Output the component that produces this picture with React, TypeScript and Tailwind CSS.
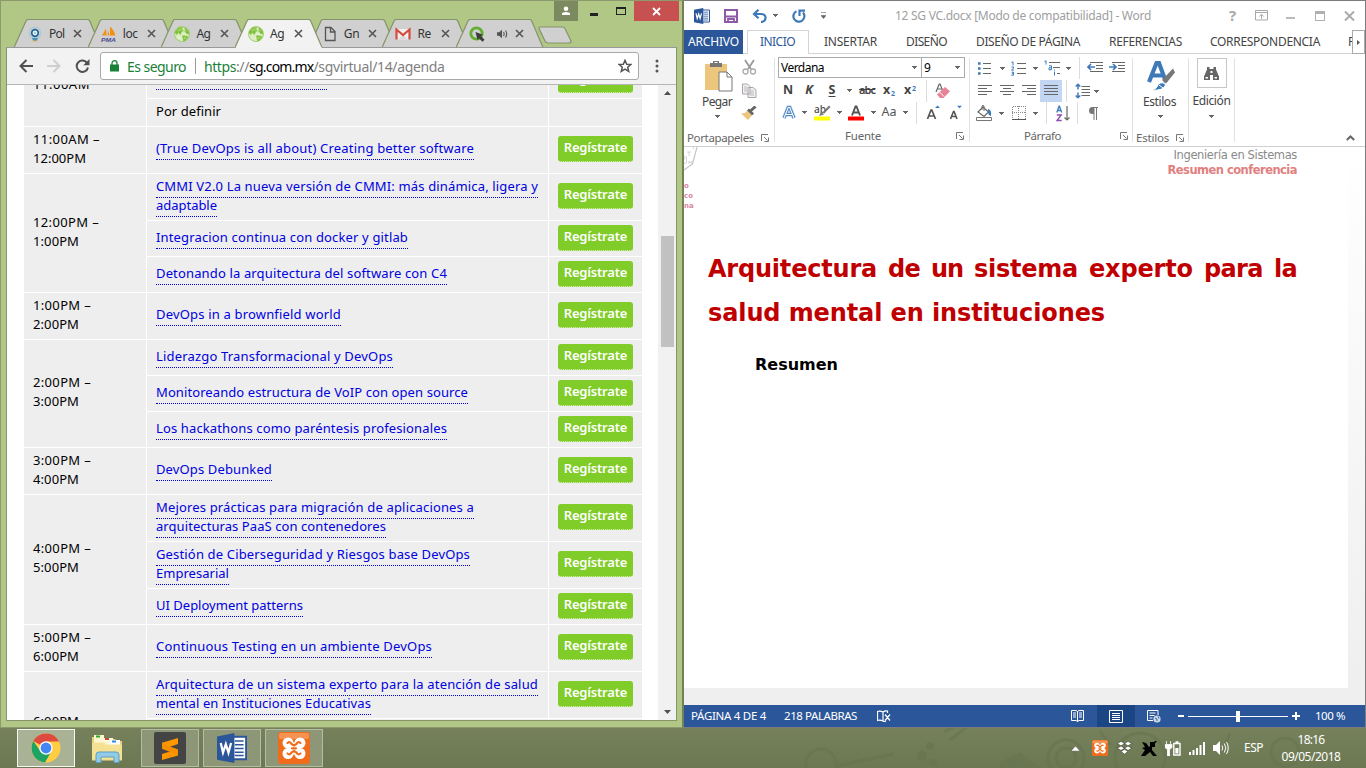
import { useLayoutEffect, useRef, type ReactNode } from "react";

/* Text set to a given line width by spreading its letters evenly. */
function Fit({ w, children, className = "" }: { w: number; children: string; className?: string }) {
  const ref = useRef<HTMLSpanElement>(null);
  useLayoutEffect(() => {
    const el = ref.current;
    if (!el) return;
    el.style.letterSpacing = "0px";
    const natural = el.getBoundingClientRect().width;
    el.style.letterSpacing = `${(w - natural) / children.length}px`;
  }, [w, children]);
  return (
    <span ref={ref} className={`inline-block w-fit shrink-0 whitespace-pre ${className}`}>
      {children}
    </span>
  );
}

function Slot({ className, children }: { className: string; children?: ReactNode }) {
  return <div className={`flex h-full shrink-0 items-center justify-center ${className}`}>{children}</div>;
}

const Caret = ({ className = "" }: { className?: string }) => (
  <svg className={`shrink-0 ${className}`} width="5" height="3" viewBox="0 0 5 3" shapeRendering="crispEdges">
    <path d="M0 0h5v1h-5zM1 1h3v1h-3zM2 2h1v1h-1z" fill="#666" />
  </svg>
);

const Rule = () => <div className="h-[22px] w-px bg-[#dcdcdc]" />;

/* ------------------------------------------------------------------ Chrome */

const Globe = () => (
  <svg width="16" height="16" viewBox="0 0 16 16">
    <circle cx="8" cy="8" r="7.5" fill="#d9ebba" />
    <path d="M1.500 4.500 4.500 1.400 8.500.8 9.500 2 8 3 10 4.500 7.500 6.500 7 9 4.500 7.500 3 9 .8 7zM10.500 1.200l3.700 2.600 1.200 4.700-2.900-.6-2-2.400zM8 9.500l4 .1 2.600 1.400-3.200 3.800-2.200.6-.7-3z" fill="#7bbf35" />
    <path d="M.5 8h15M8 .5v15M2 4h12M2 12h12M8 .5c-5 4-5 11 0 15M8 .5c5 4 5 11 0 15" stroke="#fff" strokeOpacity=".55" strokeWidth=".5" fill="none" />
    <circle cx="8" cy="8" r="7.5" fill="none" stroke="#92c855" strokeWidth=".8" />
  </svg>
);

const Crest = () => (
  <svg width="16" height="16" viewBox="0 0 16 16">
    <circle cx="8" cy="7" r="5.600" fill="none" stroke="#a3c6d3" strokeWidth="1.600" strokeDasharray="1.300 .8" />
    <circle cx="8" cy="7" r="3.300" fill="#eef" stroke="#20679b" strokeWidth="1.700" />
    <path d="M5 12h6l-1.200 3H6.200z" fill="#4b93b5" />
    <path d="M5.500 15h5" stroke="#e8b64c" strokeWidth="1" />
    <circle cx="8" cy="7" r="1" fill="#8ca" />
  </svg>
);

const Pma = () => (
  <svg width="16" height="16" viewBox="0 0 16 16">
    <path d="M1 9.500 5 2.500 5.600 9.500zM6.500 9.500 7 4 8.500 9.500zM9 9.500V.500c2.600 2.300 4.500 5.200 5.400 9z" fill="#f29111" />
    <path d="M1 10.300h14" stroke="#c9c9dc" strokeWidth=".6" />
    <text x="0" y="15.800" fontSize="5.600" fontWeight="700" fontStyle="italic" fontFamily="Liberation Sans, sans-serif" textLength="15" lengthAdjust="spacingAndGlyphs" fill="#4b4e91">PMA</text>
  </svg>
);

const PageIcon = () => (
  <svg width="16" height="16" viewBox="0 0 16 16">
    <path d="M3.500 1.500h5.500l4 4v9H3.500zM8.500 1.500V6H13" fill="none" stroke="#555" strokeWidth="1.300" />
  </svg>
);

const Gmail = () => (
  <svg width="16" height="16" viewBox="0 0 16 16">
    <path d="M1 3h14v10.500H1z" fill="#f1f1f1" />
    <path d="M3 13.500 8 8.500l5 5z" fill="#dcdcdc" />
    <path d="M1.500 13.500V3.500L8 9l6.500-5.500v10" fill="none" stroke="#d54b3d" strokeWidth="2.200" />
  </svg>
);

const Qlik = () => (
  <svg width="16" height="16" viewBox="0 0 16 16">
    <circle cx="7.500" cy="7.500" r="5.700" fill="none" stroke="#62ae2f" strokeWidth="2.800" />
    <path d="m6.500 6 7.500 2.700-2 1.300 3.500 3.800-2 2-3.600-3.500-1.300 1.900z" fill="#3c3c3c" />
  </svg>
);

const Speaker = () => (
  <svg className="ml-[12px] shrink-0" width="11" height="10" viewBox="0 0 11 10">
    <path d="M0 3.300h2L5 .8v8.400L2 6.700H0z" fill="#555" />
    <path d="M6.500 3c.8 1.200.8 2.800 0 4M8.500 1.500c1.400 2 1.400 5 0 7" fill="none" stroke="#555" strokeWidth="1.100" />
  </svg>
);

const TabX = () => (
  <svg className="shrink-0" width="9" height="9" viewBox="0 0 9 9">
    <path d="M1 1l7 7M8 1 1 8" stroke="#555" strokeWidth="1.600" />
  </svg>
);

type TabDef = { icon: ReactNode; label: string; w: number; active?: boolean; audio?: boolean };
const tabs: TabDef[] = [
  { icon: <Crest />, label: "Pol", w: 15.5 },
  { icon: <Pma />, label: "loc", w: 15 },
  { icon: <Globe />, label: "Ag", w: 14 },
  { icon: <Globe />, label: "Ag", w: 14, active: true },
  { icon: <PageIcon />, label: "Gn", w: 15.5 },
  { icon: <Gmail />, label: "Re", w: 13.5 },
  { icon: <Qlik />, label: "", w: 0, audio: true },
];

function Tab({ t }: { t: TabDef }) {
  const fill = t.active ? "#f2f2f2" : "#d0d0d0";
  return (
    <div className={`relative h-[29px] w-[73.700px] shrink-0 ${t.active ? "z-10" : ""}`}>
      <svg className="absolute top-0 left-0" width="90" height="29" viewBox="0 0 90 29">
        <path d="M0 28.500 12 2Q12.500.500 14.500.500H73Q75 .5 75.700 2L87 28.500" fill={fill} stroke="#85946a" strokeWidth="1.200" />
        {t.active ? <path d="M1 28.400h85.500" stroke="#f2f2f2" strokeWidth="1.400" /> : <path d="M0 28.500h88" stroke="#999" />}
      </svg>
      <div className="relative flex h-[29px] w-[88px] items-center pl-[13px]">
        {t.icon}
        {t.audio ? (
          <Speaker />
        ) : (
          <div className="ml-[6px] w-[18px] text-[12px] leading-[16px] whitespace-nowrap text-[#333]">
            <Fit w={t.w}>{t.label}</Fit>
          </div>
        )}
        <div className={t.audio ? "ml-[7px]" : "ml-[6px]"}>
          <TabX />
        </div>
      </div>
    </div>
  );
}

type Line = [string, number];
type Talk = { lines: Line[]; h: string; btn: boolean };
type Group = { time: string[]; talks: Talk[] };
const one = (s: string, w: number, tall = false): Talk => ({ lines: [[s, w]], h: tall ? "h-[46px]" : "h-[35px]", btn: true });
const two = (a: string, aw: number, b: string, bw: number): Talk => ({ lines: [[a, aw], [b, bw]], h: "h-[46px]", btn: true });

const groups: Group[] = [
  { time: ["11:00AM –", "12:00PM"], talks: [one("(True DevOps is all about) Creating better software", 318, true)] },
  {
    time: ["12:00PM –", "1:00PM"],
    talks: [
      two("CMMI V2.0 La nueva versión de CMMI: más dinámica, ligera y", 382, "adaptable", 61),
      one("Integracion continua con docker y gitlab", 252),
      one("Detonando la arquitectura del software con C4", 291),
    ],
  },
  { time: ["1:00PM –", "2:00PM"], talks: [one("DevOps in a brownfield world", 185, true)] },
  {
    time: ["2:00PM –", "3:00PM"],
    talks: [
      one("Liderazgo Transformacional y DevOps", 237),
      one("Monitoreando estructura de VoIP con open source", 312),
      one("Los hackathons como paréntesis profesionales", 291),
    ],
  },
  { time: ["3:00PM –", "4:00PM"], talks: [one("DevOps Debunked", 116, true)] },
  {
    time: ["4:00PM –", "5:00PM"],
    talks: [
      two("Mejores prácticas para migración de aplicaciones a", 318, "arquitecturas PaaS con contenedores", 230),
      two("Gestión de Ciberseguridad y Riesgos base DevOps", 314, "Empresarial", 73),
      one("UI Deployment patterns", 147),
    ],
  },
  { time: ["5:00PM –", "6:00PM"], talks: [one("Continuous Testing en un ambiente DevOps", 276, true)] },
];

const RegisterButton = () => (
  <div className="flex h-[26px] w-[75px] justify-center rounded-[3px] border-b border-dotted border-[#d9f0b8] bg-[#80cc28] text-[13px] leading-[22px] font-semibold text-white">
    <Fit w={63.5}>Regístrate</Fit>
  </div>
);

const Link = ({ line }: { line: Line }) => (
  <div className="-mb-px h-[20px] w-fit border-b border-dotted border-[#0000e0] text-[13px] leading-[17px] text-[#0000e0]">
    <Fit w={line[1]} className="align-top">{line[0]}</Fit>
  </div>
);

function TalkRow({ t }: { t: Talk }) {
  return (
    <div className={`flex gap-px ${t.h}`}>
      <div className="flex w-[401px] flex-col justify-center bg-[#eee] pb-px pl-[9px]">
        {t.lines.map((l) => (
          <Link key={l[0]} line={l} />
        ))}
      </div>
      <div className="flex w-[93px] items-center bg-[#eee] pb-[2px] pl-[9px]">
        <RegisterButton />
      </div>
    </div>
  );
}

const timeWidths: Record<string, number> = { "11:00AM –": 67, "12:00PM": 53, "12:00PM –": 66 };

function Agenda() {
  return (
    <div className="flex h-[636px] w-[650px] flex-col gap-px overflow-hidden pl-[16px] text-[13px] text-black">
      <div className="flex gap-px">
        <div className="flex h-[41px] w-[122px] items-start overflow-hidden bg-[#eee] pl-[9px]">
          <div className="-mt-[10px] leading-[19px]">
            <Fit w={57}>11:00AM</Fit>
          </div>
        </div>
        <div className="flex flex-col gap-px">
          <div className="flex h-[13px] gap-px">
            <div className="w-[401px] bg-[#eee] pl-[9px]">
              <div className="h-[5px] w-[171px] border-b border-dotted border-[#0000e0]" />
            </div>
            <div className="flex w-[93px] items-start overflow-hidden bg-[#eee] pl-[9px]">
              <div className="-mt-[18px]">
                <RegisterButton />
              </div>
            </div>
          </div>
          <div className="flex h-[27px] gap-px">
            <div className="w-[401px] bg-[#eee] pl-[9px] leading-[24px]">
              <Fit w={65}>Por definir</Fit>
            </div>
            <div className="w-[93px] bg-[#eee]" />
          </div>
        </div>
      </div>
      {groups.map((g) => (
        <div key={g.time[0]} className="flex gap-px">
          <div className="flex w-[122px] flex-col justify-center bg-[#eee] pb-[3px] pl-[9px] leading-[19px]">
            {g.time.map((s) => (
              <div key={s} className="h-[19px]">
                <Fit w={timeWidths[s] ?? (s.endsWith("–") ? 58 : 46)}>{s}</Fit>
              </div>
            ))}
          </div>
          <div className="flex flex-col gap-px">
            {g.talks.map((t) => (
              <TalkRow key={t.lines[0][0]} t={t} />
            ))}
          </div>
        </div>
      ))}
      <div className="flex shrink-0 gap-px">
        <div className="h-[49px] w-[122px] overflow-hidden bg-[#eee] pt-[40px] pl-[9px] leading-[19px]">
          <Fit w={46}>6:00PM</Fit>
        </div>
        <div className="flex flex-col gap-px">
          <TalkRow t={two("Arquitectura de un sistema experto para la atención de salud", 382, "mental en Instituciones Educativas", 215)} />
          <div className="flex h-[2px] gap-px">
            <div className="w-[401px] bg-[#eee]" />
            <div className="w-[93px] bg-[#eee]" />
          </div>
        </div>
      </div>
    </div>
  );
}

function ChromeWindow() {
  return (
    <div className="flex h-[728px] w-[684px] shrink-0 flex-col border border-r-2 border-[#8c9a6e] border-r-[#74805a] bg-[#b0c786]">
      <div className="flex h-[46px] items-start">
        <div className="mt-[18px] flex w-[555px] pl-[13px]">
          {tabs.map((t, i) => (
            <Tab key={i} t={t} />
          ))}
          <svg className="mt-[7px] ml-[8px] shrink-0" width="36" height="18" viewBox="0 0 36 18">
            <path d="M1.500 1H24.500Q26 1 27 2.500L33 15Q33 17 31 17H10Q8 17 7 15L1 2.500Q1 1 2 1z" fill="#d0d0d0" stroke="#85946a" strokeWidth="1.200" />
          </svg>
        </div>
        <div className="flex h-5">
          <div className="-ml-[2px] flex w-6 items-center justify-center bg-[#7b8a5f]">
            <svg width="10" height="10" viewBox="0 0 10 10"><circle cx="5" cy="2.800" r="2.300" fill="#fff" /><path d="M1 9V7.700Q1 6 5 6t4 1.700V9z" fill="#fff" /></svg>
          </div>
          <div className="flex w-[28px] items-center justify-center pt-[6px] pl-[4px]"><div className="h-[3px] w-2 bg-[#222]" /></div>
          <div className="flex w-[28px] items-center justify-center pl-[1px]"><div className="h-2 w-[10px] border border-t-2 border-[#222]" /></div>
          <div className="flex w-[45px] items-center justify-center bg-[#c75050]">
            <svg width="9" height="9" viewBox="0 0 9 9"><path d="M1 1l7 7M8 1 1 8" stroke="#fff" strokeWidth="1.800" /></svg>
          </div>
        </div>
      </div>
      <div className="ml-[5px] flex h-[674px] w-[671px] flex-col border border-[#85946a] border-t-[#999] bg-[#f2f2f2]">
        <div className="flex h-[37px] items-center border-b border-[#b6b6b6]">
          <svg className="ml-[12px]" width="14" height="14" viewBox="0 0 14 14"><path d="M14 7H1.500M7.500 1l-6 6 6 6" fill="none" stroke="#505050" strokeWidth="2" /></svg>
          <svg className="ml-[14px]" width="14" height="14" viewBox="0 0 14 14"><path d="M0 7h12.500M6.500 1l6 6-6 6" fill="none" stroke="#cfcfcf" strokeWidth="2" /></svg>
          <svg className="ml-[14px]" width="15" height="14" viewBox="0 0 15 14"><path d="M12.300 4.200A5.700 5.700 0 1 0 13 8.500" fill="none" stroke="#505050" strokeWidth="2" /><path d="M14.500 0v6.200H8.300z" fill="#505050" /></svg>
          <div className="ml-[10px] flex h-7 w-[539px] items-center rounded-[3px] border border-[#a8a8a8] bg-white text-[14px]">
            <svg className="ml-[9px]" width="9" height="12" viewBox="0 0 9 12"><path d="M0 4.500h9V11.500H0z" fill="#188038" /><path d="M2 5V3.200a2.500 2.500 0 0 1 5 0V5" fill="none" stroke="#188038" strokeWidth="1.300" /></svg>
            <div className="ml-[8px] text-[#188038]"><Fit w={59}>Es seguro</Fit></div>
            <div className="ml-[9px] h-4 w-px bg-[#9a9a9a]" />
            <div className="ml-[8px] flex">
              <Fit w={32} className="text-[#188038]">https</Fit>
              <Fit w={13} className="text-[#808080]">://</Fit>
              <Fit w={64.5} className="text-black">sg.com.mx</Fit>
              <Fit w={131} className="text-[#808080]">/sgvirtual/14/agenda</Fit>
            </div>
            <svg className="mr-[6px] ml-auto" width="14" height="14" viewBox="0 0 14 14"><path d="m7 1.300 1.700 3.900 4.200.3-3.200 2.700 1 4.200L7 10.200l-3.700 2.200 1-4.200L1.100 5.500l4.200-.3z" fill="none" stroke="#555" strokeWidth="1.500" /></svg>
          </div>
          <svg className="ml-[16px]" width="4" height="14" viewBox="0 0 4 14"><circle cx="2" cy="2" r="1.500" fill="#555" /><circle cx="2" cy="7" r="1.500" fill="#555" /><circle cx="2" cy="12" r="1.500" fill="#555" /></svg>
        </div>
        <div className="flex h-[635px] overflow-hidden bg-white">
          <div className="h-[635px] pl-px"><Agenda /></div>
          <div className="flex h-[635px] w-[18px] flex-col items-center bg-[#f1f1f1] py-[6px]">
            <svg className="shrink-0" width="7" height="4" viewBox="0 0 7 4"><path d="M0 4h7L3.500 0z" fill="#505050" /></svg>
            <div className="mt-[141px] ml-px h-[111px] w-[13px] bg-[#c1c1c1]" />
            <svg className="mt-auto shrink-0" width="7" height="4" viewBox="0 0 7 4"><path d="M0 0h7L3.500 4z" fill="#505050" /></svg>
          </div>
        </div>
      </div>
    </div>
  );
}

/* -------------------------------------------------------------------- Word */

const Lines = ({ rows }: { rows: [number, number][] }) => (
  <svg width="14" height="13" viewBox="0 0 14 13" shapeRendering="crispEdges">
    {rows.map(([x, w], i) => (
      <rect key={i} x={x} y={i * 3} width={w} height="1" fill="#666" />
    ))}
  </svg>
);

const Launcher = () => (
  <svg width="8" height="8" viewBox="0 0 8 8"><path d="M.5 7V.5H7M3 3l3.500 3.500M7.500 3.500v4h-4" fill="none" stroke="#777" /></svg>
);

const WordLogo = ({ s = 16 }: { s?: number }) => (
  <svg width={s} height={s} viewBox="0 0 16 16">
    <path d="M8.500 2H15.500V14H8.500z" fill="#fff" stroke="#2b579a" />
    <path d="M9.500 4.200h4.700M9.500 6.200h4.700M9.500 8.200h4.700M9.500 10.200h4.700M9.500 12h4.700" stroke="#2b579a" strokeWidth=".8" />
    <path d="M0 1.800 9.300 0v16L0 14.200z" fill="#2b579a" />
    <path d="M2 5.300l1.200 5.200L4.700 6l1.400 4.500L7.500 5.300" fill="none" stroke="#fff" strokeWidth="1.200" />
  </svg>
);

function WordTitle() {
  return (
    <div className="flex h-[29px] shrink-0 items-center">
      <div className="ml-[10px]"><WordLogo /></div>
      <svg className="ml-[14px]" width="14" height="14" viewBox="0 0 14 14"><path d="M1 1h12v12H1z" fill="#fff" stroke="#8e5aa8" strokeWidth="2" /><path d="M1 7.500h12M4 13v-3h6v3" fill="none" stroke="#8e5aa8" strokeWidth="1.800" /></svg>
      <svg className="ml-[14px]" width="16" height="14" viewBox="0 0 16 14"><path d="M2 5h7.500c5.500 0 5.500 7.500-.5 8M6.500.8 2 5l4.500 4.200" fill="none" stroke="#3e7ab8" strokeWidth="2.200" /></svg>
      <Caret className="ml-[5px]" />
      <svg className="ml-[14px]" width="15" height="14" viewBox="0 0 15 14"><path d="M4.500 2.200A5.500 5.500 0 1 0 11 3.500M7.500 7V1.600h5.500" fill="none" stroke="#3e7ab8" strokeWidth="2.200" /></svg>
      <svg className="ml-[14px]" width="5" height="7" viewBox="0 0 5 7"><path d="M0 .5h5M0 3.500h5L2.500 6.500z" fill="#666" stroke="#666" strokeWidth=".6" /></svg>
      <div className="ml-[69px] text-[12px] text-[#a0a0a0]"><Fit w={256}>12 SG VC.docx [Modo de compatibilidad] - Word</Fit></div>
      <div className="ml-[78px] w-[8px] text-[15px] font-bold text-[#a8a8a8]">?</div>
      <svg className="ml-[18px]" width="13" height="11" viewBox="0 0 13 11"><path d="M.5.500h12v9.500H.5zM.5 2.500h12M6.500 9V4.500M4.300 6.500l2.200-2.200 2.200 2.200" fill="none" stroke="#aaa" /></svg>
      <div className="mt-[4px] ml-[18px] h-[2px] w-[9px] bg-[#bbb]" />
      <div className="ml-[20px] h-[10px] w-[10px] border border-t-[3px] border-[#b0b0b0]" />
      <svg className="ml-[19px]" width="11" height="10" viewBox="0 0 11 10"><path d="m1 .5 9 9m0-9-9 9" stroke="#aaa" strokeWidth="2" /></svg>
    </div>
  );
}

function WordTabs() {
  return (
    <div className="flex h-[24px] shrink-0 overflow-hidden text-[12px] leading-[23px] text-[#444]">
      <div className="h-6 w-[59px] bg-[#2b579a] pl-[4px] text-white"><Fit w={51}>ARCHIVO</Fit></div>
      <div className="w-[4px] border-b border-[#d4d4d4]" />
      <div className="w-[62px] border border-b-0 border-[#d4d4d4] pl-[12px] leading-[22px] text-[#2b579a]"><Fit w={35}>INICIO</Fit></div>
      <div className="flex flex-1 overflow-hidden border-b border-[#d4d4d4]">
        <Fit w={53} className="ml-[15px]">INSERTAR</Fit>
        <Fit w={41} className="ml-[29px]">DISEÑO</Fit>
        <Fit w={104} className="ml-[29px]">DISEÑO DE PÁGINA</Fit>
        <Fit w={73} className="ml-[29px]">REFERENCIAS</Fit>
        <Fit w={110} className="ml-[28px]">CORRESPONDENCIA</Fit>
        <span className="ml-[28px]">R</span>
      </div>
      <div className="flex w-[13px] items-center justify-center border border-[#ababab] bg-white">
        <svg width="3" height="5" viewBox="0 0 3 5"><path d="M0 0v5l3-2.500z" fill="#555" /></svg>
      </div>
    </div>
  );
}

const FootLabel = ({ text, w, className }: { text: string; w: number; className: string }) => (
  <div className={`flex h-4 items-center text-[11.500px] leading-[16px] text-[#666] ${className}`}>
    <Fit w={w}>{text}</Fit>
  </div>
);

const rowCls = "flex h-[23px] items-center";
const footCls = "flex h-4 shrink-0 items-center pt-[2px]";

function Clipboard() {
  return (
    <div className="flex h-[86px] w-[90px] flex-col">
      <div className="flex h-[72px] shrink-0">
        <div className="flex w-[54px] flex-col items-center pt-[3px] pl-[14px]">
          <svg width="29" height="32" viewBox="0 0 29 32" className="shrink-0">
            <path d="M1 4h22v26H1z" fill="#ecc67c" /><path d="M6 3h3V1h6v2h3v4H6z" fill="#777" /><path d="M10.500 2.500h3" stroke="#fff" />
            <path d="M15 12h8l5 5v14H15z" fill="#fff" stroke="#777" /><path d="M23 12v5h5" fill="none" stroke="#777" />
          </svg>
          <div className="mt-[2px] -ml-[2px] text-[12px] leading-[16px] text-[#444]"><Fit w={30}>Pegar</Fit></div>
          <Caret className="mt-[5px] -ml-[2px]" />
        </div>
        <div className="flex w-[22px] flex-col items-center">
          <svg className="mt-[2px] shrink-0" width="15" height="16" viewBox="0 0 15 16"><path d="M3 1l6 9M12 1 6 10" stroke="#999" strokeWidth="1.800" /><circle cx="3.500" cy="12.500" r="2.500" fill="none" stroke="#aaa" strokeWidth="1.300" /><circle cx="11" cy="12.500" r="2.500" fill="none" stroke="#aaa" strokeWidth="1.300" /></svg>
          <svg className="mt-[8px] shrink-0" width="15" height="15" viewBox="0 0 15 15"><path d="M.5 1h5l2.500 2.500V11H.5zM6 4.500h5L14 7v7.500H6z" fill="#f2f0f2" stroke="#aaa5ab" /><path d="M2 4h3M2 6h3M2 8h3M8 8h4M8 10h4M8 12h4" stroke="#bbb" /></svg>
          <svg className="mt-[8px] shrink-0" width="16" height="14" viewBox="0 0 16 14"><path d="M10 4.500 14.500.5M7 3.500l5 5" stroke="#666" strokeWidth="3" /><path d="m6 4.500 5 5L7 14 0 7.500l4-.5z" fill="#ecc67c" /></svg>
        </div>
      </div>
      <div className={footCls}>
        <FootLabel text="Portapapeles" w={67} className="ml-[3px]" />
        <div className="ml-[7px]"><Launcher /></div>
      </div>
    </div>
  );
}

function FontGroup() {
  return (
    <div className="flex h-[86px] w-[194px] flex-col pl-[3px] text-[#444]">
      <div className="flex h-[22px]">
        <div className="flex w-[144px] items-center justify-between border border-[#ababab] pr-[4px] pl-[2px] text-[12px] text-black"><Fit w={43}>Verdana</Fit><Caret /></div>
        <div className="-ml-px flex w-[44px] items-center justify-between border border-[#ababab] pr-[4px] pl-[2px] text-[12px] text-black"><span>9</span><Caret /></div>
      </div>
      <div className={`${rowCls} mt-px`}>
        <Slot className="w-[20px] text-[12.500px] font-bold">N</Slot>
        <Slot className="w-[22px] text-[12.500px] font-bold italic">K</Slot>
        <Slot className="w-[24px] text-[12.500px] font-bold underline underline-offset-2">S</Slot>
        <Slot className="w-[10px]"><Caret /></Slot>
        <Slot className="w-[26px] text-[11px] line-through"><Fit w={16} className="font-semibold">abc</Fit></Slot>
        <Slot className="w-[18px] text-[12.500px] font-bold"><span>x<sub className="ml-px text-[7px] text-[#3e7ab8]">2</sub></span></Slot>
        <Slot className="w-[24px] text-[12.500px] font-bold"><span>x<sup className="ml-px text-[7px] text-[#3e7ab8]">2</sup></span></Slot>
        <Slot className="w-[8px]"><Rule /></Slot>
        <Slot className="w-[24px]">
          <svg width="15" height="15" viewBox="0 0 15 15"><path d="M1 9 4.200 1h.8L7.500 7M2 6h5" stroke="#666" strokeWidth="1.200" fill="none" /><path d="m10 4 5 4.200L8.500 15H5L2 11.500z" fill="#e8839a" /><path d="m4.500 9 4.500 4.500" stroke="#fff" /></svg>
        </Slot>
      </div>
      <div className={rowCls}>
        <Slot className="w-[22px]">
          <svg width="14" height="16" viewBox="0 0 14 16"><path d="M2 13 6.200 2.500h1.600L12 13M3.800 9.500h6.400" fill="none" stroke="#9dc3e6" strokeWidth="4" /><path d="M2 13 6.200 2.500h1.600L12 13M3.800 9.500h6.400" fill="none" stroke="#3e7ab8" strokeWidth="2.600" /><path d="M2 13 6.200 2.500h1.600L12 13M3.800 9.500h6.400" fill="none" stroke="#fff" strokeWidth="1.100" /></svg>
        </Slot>
        <Slot className="w-[8px]"><Caret /></Slot>
        <Slot className="w-[28px]">
          <svg width="17" height="17" viewBox="0 0 17 17"><rect y="12.500" width="16" height="4" fill="#ff0" /><text x="0" y="9" fontSize="10" fontWeight="600" fontFamily="Open Sans, sans-serif" fill="#555">ab</text><path d="m5 12 2-4 3 2.500zM8.500 8.500 15 1.500l1.500 1.500L10 9.800z" fill="#777" /></svg>
        </Slot>
        <Slot className="w-[6px]"><Caret /></Slot>
        <Slot className="w-[28px]">
          <svg width="16" height="17" viewBox="0 0 16 17"><rect y="12.500" width="16" height="4" fill="#f00" /><path d="M4 11.500 7.500 2.500h1l3.500 9M5.500 8.500h5" fill="none" stroke="#555" strokeWidth="1.900" /></svg>
        </Slot>
        <Slot className="w-[6px]"><Caret /></Slot>
        <Slot className="w-[26px] text-[12.500px] text-[#555]">Aa</Slot>
        <Slot className="w-[6px]"><Caret /></Slot>
        <Slot className="w-[16px]"><Rule /></Slot>
        <Slot className="w-[18px]">
          <svg width="14" height="15" viewBox="0 0 14 15"><path d="M1.500 14 5 5h.8L9.500 14M3 11h5" fill="none" stroke="#555" strokeWidth="1.700" /><path d="M9 3h5L11.500.5z" fill="#3e7ab8" /></svg>
        </Slot>
        <Slot className="w-[26px]">
          <svg width="13" height="15" viewBox="0 0 13 15"><path d="M1.500 14 4.500 6.500h.6L8 14M2.500 11.500h4.500" fill="none" stroke="#555" strokeWidth="1.600" /><path d="M8 .8h5L10.500 3.300z" fill="#3e7ab8" /></svg>
        </Slot>
      </div>
      <div className={`${footCls} mt-[3px]`}>
        <FootLabel text="Fuente" w={36} className="ml-[67px]" />
        <div className="ml-[75px]"><Launcher /></div>
      </div>
    </div>
  );
}

function ParagraphGroup() {
  return (
    <div className="flex h-[86px] w-[162px] flex-col">
      <div className="flex h-[22px] items-center">
        <Slot className="w-[29px]"><svg width="13" height="14" viewBox="0 0 13 14"><path d="M5 2.500h8M5 7.500h8M5 12.500h8" stroke="#666" /><path d="M0 1.200h2.600v2.600H0zM0 6.200h2.600v2.600H0zM0 11.200h2.600v2.600H0z" fill="#3e7ab8" /></svg></Slot>
        <Slot className="w-[6px]"><Caret /></Slot>
        <Slot className="w-[27px]"><svg width="15" height="15" viewBox="0 0 15 15"><path d="M6 2.500h9M6 7.500h9M6 12.500h9" stroke="#666" /><path d="M.5 1.500 2 .8V4.500M.5 6h2v1.200L.5 9h2.500M.5 11.200h2v3H.3M1 12.600h1.500" stroke="#3e7ab8" fill="none" /></svg></Slot>
        <Slot className="w-[6px]"><Caret /></Slot>
        <Slot className="w-[27px]"><svg width="16" height="16" viewBox="0 0 16 16"><path d="M5 2.500h11M9 7.500h7M13 13.500h3" stroke="#666" /><path d="M.5 1.500 2 .8V4.500M5 5.800h2.500v4H5v-2h2.500M10.500 11.500v4M10.500 9.500v1" stroke="#3e7ab8" fill="none" /></svg></Slot>
        <Slot className="w-[6px]"><Caret /></Slot>
        <Slot className="w-[16px]"><Rule /></Slot>
        <Slot className="w-[16px]"><svg width="16" height="12" viewBox="0 0 16 12"><path d="M3 .5h13M9 3.500h7M9 6.500h7M3 9.500h13" stroke="#666" /><path d="M8 5H1M4 2 1 5l3 3" fill="none" stroke="#3e7ab8" strokeWidth="1.700" /></svg></Slot>
        <Slot className="w-[28px]"><svg width="16" height="12" viewBox="0 0 16 12"><path d="M3 .5h13M9 3.500h7M9 6.500h7M3 9.500h13" stroke="#666" /><path d="M0 5h7M4 2l3 3-3 3" fill="none" stroke="#3e7ab8" strokeWidth="1.700" /></svg></Slot>
      </div>
      <div className={`${rowCls} mt-px`}>
        <Slot className="w-[29px]"><Lines rows={[[0, 14], [0, 9], [0, 14], [0, 9]]} /></Slot>
        <Slot className="w-[16px]"><Lines rows={[[0, 14], [3, 8], [0, 14], [3, 8]]} /></Slot>
        <Slot className="w-[25px] pl-[3px]"><Lines rows={[[0, 14], [5, 9], [0, 14], [5, 9]]} /></Slot>
        <Slot className="w-[22px] bg-[#c2d5f2]"><Lines rows={[[0, 14], [0, 14], [0, 14], [0, 14]]} /></Slot>
        <Slot className="w-[9px]"><Rule /></Slot>
        <Slot className="w-[22px]"><svg width="15" height="16" viewBox="0 0 15 16"><path d="M6.500 3.500H15M6.500 6.500H15M6.500 9.500H15M6.500 12.500H15" stroke="#666" /><path d="M3 1v5.500M.7 3.500 3 1.200l2.300 2.300M3 9.500V15M.7 12.500 3 14.800l2.300-2.300" fill="none" stroke="#3e7ab8" strokeWidth="1.500" /></svg></Slot>
        <Slot className="w-[7px]"><Caret /></Slot>
      </div>
      <div className={rowCls}>
        <Slot className="w-[28px]"><svg width="16" height="16" viewBox="0 0 16 16"><path d="M.5 12.500h15v3H.5z" fill="#fff" stroke="#777" /><path d="m2 7 5-5 5.500 5L8 11.500z" fill="#fff" stroke="#666" strokeWidth="1.200" /><path d="M6 5V1q1-1.200 2 0v5" fill="none" stroke="#666" /><path d="M12 4q4 1 3 7-3-1-3-4z" fill="#3e7ab8" /></svg></Slot>
        <Slot className="w-[7px]"><Caret /></Slot>
        <Slot className="w-[27px]"><svg width="14" height="14" viewBox="0 0 14 14" shapeRendering="crispEdges"><path d="M.5.500h13v13M.5.500v13M6.500 0v13M0 6.500h14" fill="none" stroke="#888" strokeDasharray="1 1" /><path d="M0 13.500h14" stroke="#555" /></svg></Slot>
        <Slot className="w-[7px]"><Caret /></Slot>
        <Slot className="w-[15px]"><Rule /></Slot>
        <Slot className="w-[18px]">
          <svg width="14" height="17" viewBox="0 0 14 17"><path d="M.8 7.500 3 1.200h.4L5.700 7.500M1.700 5.500h3" fill="none" stroke="#3e7ab8" strokeWidth="1.300" /><path d="M.8 10h4.400L1 15.500h4.700" fill="none" stroke="#8e4fae" strokeWidth="1.400" /><path d="M11 1v14M8.500 12.500 11 15l2.500-2.500" fill="none" stroke="#666" strokeWidth="1.200" /></svg>
        </Slot>
        <Slot className="w-[11px]"><Rule /></Slot>
        <Slot className="w-[19px]"><svg width="10" height="13" viewBox="0 0 10 13"><path d="M5 0h5v1H9v12H8V1H6.500v12h-1V7H4.500A3.500 3.500 0 0 1 4.500 0z" fill="#777" /></svg></Slot>
      </div>
      <div className={`${footCls} mt-[3px]`}>
        <FootLabel text="Párrafo" w={37} className="ml-[54px]" />
        <div className="ml-[59px]"><Launcher /></div>
      </div>
    </div>
  );
}

const GroupRule = () => <div className="mt-px h-[84px] w-px bg-[#e1e1e1]" />;

function Ribbon() {
  return (
    <div className="relative flex h-[93px] shrink-0 border-b border-[#d0d0d0] pt-[3px]">
      <Clipboard />
      <GroupRule />
      <FontGroup />
      <GroupRule />
      <ParagraphGroup />
      <GroupRule />
      <div className="flex h-[86px] w-[55px] flex-col">
        <div className="flex h-[72px] shrink-0 flex-col items-center pt-[3px] text-[12px] leading-[16px] text-[#444]">
          <svg width="30" height="32" viewBox="0 0 30 32" className="shrink-0"><path d="M3 22 10.500 3h2.500L20 22M6 15.500h11" fill="none" stroke="#3e7ab8" strokeWidth="4.200" /><path d="m16 20 11-11.500 2 4-9 11z" fill="#777" /><path d="M6 30q5-1 6.500-6 5-3 7 1-2 6-13.500 5z" fill="#3e7ab8" stroke="#fff" /><path d="m13 25 4 3" stroke="#fff" /></svg>
          <div className="mt-[2px] -ml-[2px]"><Fit w={33}>Estilos</Fit></div>
          <Caret className="mt-[5px] -ml-px" />
        </div>
        <div className={footCls}><FootLabel text="Estilos" w={33} className="ml-[3px]" /><div className="ml-[7px]"><Launcher /></div></div>
      </div>
      <GroupRule />
      <div className="flex h-[86px] w-[45px] flex-col items-center text-[12px] leading-[16px] text-[#444]">
        <div className="mt-px flex h-[30px] w-[30px] shrink-0 items-center justify-center border border-[#c6c6c6]">
          <svg width="15" height="13" viewBox="0 0 15 13"><path d="M3 0h2.500v2H9.500V0H12v2.500l3 7V13H9V8H6v5H0V9.500l3-7z" fill="#666" /><path d="M6.500 4h2v2h-2zM1.500 10H4v1.500H1.500zM10.500 10H13v1.500h-2.500z" fill="#fff" /></svg>
        </div>
        <div className="mt-[5px]"><Fit w={38}>Edición</Fit></div>
        <Caret className="mt-[6px]" />
      </div>
      <GroupRule />
      <svg className="absolute right-[10px] bottom-[5px]" width="9" height="6" viewBox="0 0 9 6"><path d="m.8 5 3.700-3.500L8.200 5" fill="none" stroke="#666" strokeWidth="2" /></svg>
    </div>
  );
}

function WordDocument() {
  return (
    <div className="flex h-[558px] shrink-0 flex-col bg-[#efefef]">
      <div className="flex h-[541px]">
        <div className="relative w-[664px] bg-white pt-[1px] font-['DejaVu_Sans',sans-serif]">
          <svg className="absolute top-0 left-0" width="16" height="24" viewBox="0 0 16 24"><path d="M13 0 8.500 17 0 23" fill="none" stroke="#c4c4c4" strokeWidth="1.200" /><path d="M3 5h4M5 5v4M0 13v-3h2.500v6H0M5 17v-3l1.500 2L8 14v3M9 0l1 2" fill="none" stroke="#c9c9c9" strokeWidth=".8" /></svg>
          <div className="absolute top-[34px] left-0 text-[7px] leading-[10px] font-bold text-[#dd86a4]">o<br />co<br />na</div>
          <div className="flex flex-col items-end pr-[51px] text-[11.500px] leading-[15px]">
            <Fit w={123.5} className="text-[#8a8a8a]">Ingeniería en Sistemas</Fit>
            <Fit w={129.5} className="font-bold text-[#e17f7f]">Resumen conferencia</Fit>
          </div>
          <div className="mt-[69px] ml-[24px] w-[589px] text-[24px] leading-[44px] font-bold text-[#c00000]">
            <div className="flex justify-between">
              <Fit w={169}>Arquitectura</Fit>
              <Fit w={32}>de</Fit>
              <Fit w={32}>un</Fit>
              <Fit w={104}>sistema</Fit>
              <Fit w={104}>experto</Fit>
              <Fit w={59}>para</Fit>
              <Fit w={23}>la</Fit>
            </div>
            <Fit w={397}>salud mental en instituciones</Fit>
          </div>
          <div className="mt-[18px] ml-[71px] text-[16px] leading-[24px] font-bold text-black"><Fit w={83}>Resumen</Fit></div>
        </div>
        <div className="flex-1 bg-gradient-to-b from-white to-[#efefef]" />
      </div>
    </div>
  );
}

function StatusBar() {
  return (
    <div className="flex h-[22px] shrink-0 items-center bg-[#2b579a] text-[11.500px] text-white">
      <Fit w={75} className="ml-[7px]">PÁGINA 4 DE 4</Fit>
      <Fit w={73} className="ml-[18px]">218 PALABRAS</Fit>
      <svg className="ml-[20px]" width="14" height="13" viewBox="0 0 14 13"><path d="M6 2Q3 .5.500 1.500v9Q3 9.500 6 11zM6 2Q8 .5 10.500 1v2M6 11q1 1 3 0M8 4.500l5 6M13 4.500l-5 6" fill="none" stroke="#fff" strokeWidth="1.200" /></svg>
      <svg className="ml-[180px]" width="13" height="12" viewBox="0 0 13 12"><path d="M.5.500H5L6.500 1.500 8 .5h4.500v10H8l-1.500 1-1.500-1H.5zM6.500 1v11M2 3h3M2 5h3M2 7h3M8 3h3M8 5h3M8 7h3" fill="none" stroke="#fff" /></svg>
      <div className="ml-[13px] flex h-full w-[38px] items-center justify-center bg-[#1c4584]"><svg width="14" height="13" viewBox="0 0 14 13"><path d="M.5.500h13v12H.5zM3 3.500h8M3 5.500h8M3 7.500h8M3 9.500h8" fill="none" stroke="#fff" /></svg></div>
      <svg className="ml-[12px]" width="14" height="13" viewBox="0 0 14 13"><path d="M11 5V.5H.5v10H6M2.500 3h6M2.500 5.500h5M2.500 8h3" fill="none" stroke="#fff" /><circle cx="10" cy="9" r="3.600" fill="#cfdbec" /><path d="M8 8l2 1v2M11 6.500l1 2" stroke="#2b579a" fill="none" /></svg>
      <div className="ml-[17px] h-[2px] w-[6px] bg-white" />
      <div className="ml-[4px] flex w-[100px] items-center"><div className="h-px w-12 bg-white" /><div className="h-[11px] w-[4px] bg-white" /><div className="h-px w-12 bg-white" /></div>
      <svg className="ml-[4px]" width="8" height="8" viewBox="0 0 8 8"><path d="M4 0v8M0 4h8" stroke="#fff" strokeWidth="2" /></svg>
      <Fit w={30} className="ml-[15px]">100 %</Fit>
    </div>
  );
}

function WordWindow() {
  return (
    <div className="flex h-[728px] w-[682px] flex-col border-t border-r border-b border-[#7c7c7c] bg-white">
      <WordTitle />
      <WordTabs />
      <Ribbon />
      <WordDocument />
      <StatusBar />
    </div>
  );
}

/* ----------------------------------------------------------------- Taskbar */

const Xampp = ({ s }: { s: number }) => (
  <svg width={s} height={s} viewBox="0 0 32 32">
    <rect width="32" height="32" rx="3" fill="#ee6c1b" /><rect x="1" y="1" width="30" height="6" rx="2" fill="#f6a267" opacity=".75" />
    <rect x="9.500" y="10.500" width="13" height="12" fill="#fff" />
    <circle cx="10" cy="11" r="5.500" fill="#fff" /><circle cx="22" cy="11" r="5.500" fill="#fff" /><circle cx="10" cy="21.500" r="5.500" fill="#fff" /><circle cx="22" cy="21.500" r="5.500" fill="#fff" />
    <path d="M9.500 11q2.500-2 4 1l2.500 1.500 2.500-1.500q1.500-3 4-1M9.500 21.500q2.500 2 4-1L16 19l2.500 1.500q1.500 3 4 1M14 16.300h4" fill="none" stroke="#ee6c1b" strokeWidth="2.200" strokeLinecap="round" />
  </svg>
);

const taskBtn = "flex h-[38px] w-[58px] shrink-0 items-center justify-center border";

function Taskbar() {
  return (
    <div className="relative flex h-10 w-[1366px] bg-gradient-to-b from-[#76815c] to-[#6b7852] text-white">
      <svg className="absolute top-0 left-0" width="1366" height="40" viewBox="0 0 1366 40">
        <g fill="none" stroke="#667450" strokeWidth="3" opacity=".6">
          <circle cx="821" cy="36" r="15" /><path d="m837 38 56-12M944 4 974-12M950 12 968-2" />
          <circle cx="1066" cy="30" r="18" /><circle cx="1140" cy="30" r="25" /><circle cx="1066" cy="30" r="10" /><circle cx="1285" cy="24" r="14" /><path d="m1100 3 10 14m120-12-8 18" />
        </g>
        <g fill="#667450" opacity=".6"><circle cx="930" cy="18" r="4" /><circle cx="922" cy="28" r="5" /><circle cx="933" cy="35" r="4" /><path d="m1000 34 20-10 20 16h-40z" /></g>
      </svg>
      <div className="relative flex items-center pl-[17px]">
        <div className={`${taskBtn} border-white/90 bg-[#aab295]`}>
          <svg width="30" height="30" viewBox="0 0 30 30"><circle cx="15" cy="15" r="14.500" fill="#fc4" /><path d="M15 15 2.300 8A14.500 14.500 0 0 1 28 8.500H15z" fill="#dc4b3e" /><path d="M2.300 8A14.500 14.500 0 0 0 14 29.400L20.500 18 9.300 18z" fill="#1da362" /><circle cx="15" cy="15" r="6.700" fill="#fff" /><circle cx="15" cy="15" r="5.400" fill="#4486f4" /></svg>
        </div>
        <div className="flex w-[66px] justify-center pr-[2px] pt-[2px]">
          <svg width="32" height="30" viewBox="0 0 32 30"><path d="M1 3h11l2 2h10l2 2h5v18H1z" fill="#e8cf73" /><path d="M3 1h10v8H3z" fill="#fff6d0" /><path d="M5 1.500h4v2H5z" fill="#2ba92b" /><path d="M12 4h10v8H12z" fill="#fffae0" /><path d="M14 4h4v2h-4z" fill="#d24726" /><path d="M19 6h10v8H19z" fill="#fff" /><path d="M21 6.500h4v2h-4z" fill="#2a8dd4" /><path d="M1 8.500h12l2 2h16v16H1z" fill="#f4e292" opacity=".95" /><path d="M5 28.500V21q0-3 3-3h17q3 0 3 3v7.500h-5V23H10v5.500z" fill="#91cbe8" stroke="#5b9fc5" /></svg>
        </div>
        <div className={`${taskBtn} border-[#b5bca4] bg-[#8d9777]`}>
          <svg width="32" height="32" viewBox="0 0 32 32"><rect width="32" height="32" rx="2" fill="#444" /><path d="M24 6v6l-8 2.700L24 17.500v6L8 28v-6l8-2.500-8-2.800v-6z" fill="#ff9800" /><path d="m8 16.700 16 6.800v-6l-16-6z" fill="#f28b00" opacity=".6" /></svg>
        </div>
        <div className={`${taskBtn} ml-[4px] border-[#b5bca4] bg-[#8d9777]`}><WordLogo s={30} /></div>
        <div className={`${taskBtn} ml-[4px] border-[#b5bca4] bg-[#8d9777]`}><Xampp s={32} /></div>
      </div>
      <div className="relative ml-auto flex w-[295px] items-center">
        <svg width="9" height="5" viewBox="0 0 9 5"><path d="M0 5h9L4.500 0z" fill="#fff" stroke="#444" strokeWidth=".4" /></svg>
        <div className="ml-[12px]"><Xampp s={16} /></div>
        <svg className="ml-[9px]" width="15" height="14" viewBox="0 0 15 14"><path d="m4 .3 3.500 2.300L4 4.900.3 2.600zM11 .3l3.700 2.300L11 4.900 7.500 2.600zM.3 7.200 4 4.900l3.500 2.300L4 9.500zM11 4.900l3.700 2.300L11 9.500 7.500 7.200zM4 10.500l3.500-2.300 3.500 2.300-3.500 2.700z" fill="#fff" stroke="#333b28" strokeWidth=".6" /></svg>
        <svg className="ml-[9px]" width="16" height="15" viewBox="0 0 16 15"><path d="m1 1 4 1 3 4L14 0h2l-5 6v3l5 6h-4l-3-4-5 4H0l4-6-3-2 3-1zM9 1h5v5H9z" fill="#000" /></svg>
        <svg className="ml-[8px]" width="16" height="15" viewBox="0 0 16 15"><path d="M1.500 0v3M5.500 0v3M0 3.500h7v3L4.500 8.500V15h-2V8.500L0 6.500z" fill="#fff" stroke="#fff" strokeWidth=".8" /><path d="M8.800 2.500H15V14H8.800zM10.500 1h3" fill="none" stroke="#fff" strokeWidth="1.400" /><path d="M10.300 7h3.200v5.500h-3.200z" fill="#fff" /></svg>
        <svg className="ml-[8px]" width="16" height="13" viewBox="0 0 16 13"><path d="M0 10h2v3H0zM3.500 8h2v5h-2zM7 6h2v7H7zM10.500 3h2v10h-2zM14 0h2v13h-2z" fill="#fff" /></svg>
        <svg className="ml-[8px]" width="16" height="14" viewBox="0 0 16 14"><path d="M0 4h3l4-4v14L3 10H0z" fill="#fff" /><path d="M9 4.500q1.500 2.500 0 5M11.300 2.500q3 4.500 0 9M13.500 1q3.500 6 0 12" fill="none" stroke="#fff" /></svg>
        <Fit w={19} className="ml-[15px] text-[12px]">ESP</Fit>
        <div className="ml-[17px] flex w-[62px] flex-col items-center text-[12px] leading-[17px]">
          <Fit w={27}>18:16</Fit>
          <Fit w={59}>09/05/2018</Fit>
        </div>
      </div>
    </div>
  );
}

export default function App() {
  return (
    <div className="flex h-[768px] w-[1366px] flex-col overflow-hidden font-['Noto_Sans','Open_Sans',sans-serif]">
      <div className="flex">
        <ChromeWindow />
        <WordWindow />
      </div>
      <Taskbar />
    </div>
  );
}
